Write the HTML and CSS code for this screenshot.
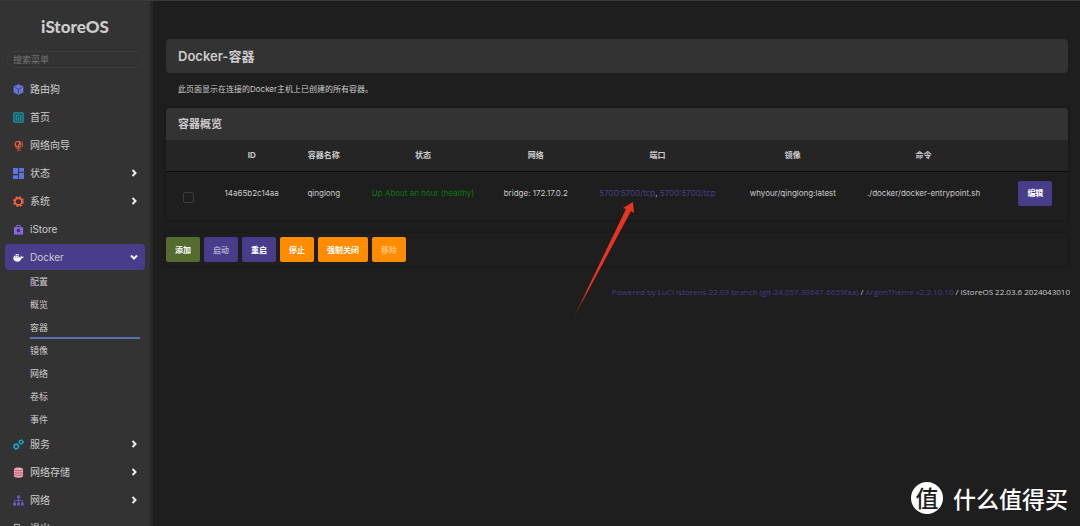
FILE: index.html
```html
<!DOCTYPE html>
<html lang="zh-CN">
<head>
<meta charset="utf-8">
<meta name="viewport" content="width=device-width, initial-scale=1">
<title>iStoreOS - Docker 容器</title>
<link rel="stylesheet" href="styles.css">
</head>
<body>
<div class="shell">
  <aside class="sidebar">
    <a class="brand" href="#">iStoreOS</a>
    <input class="search" type="text" placeholder="搜索菜单" aria-label="搜索菜单">
    <nav class="menu">
      <a class="item" href="#"><svg class="icon" viewBox="0 0 12 12"><path fill="#6675e0" d="M6 .3 11.300 2.800v6.400L6 11.800.700 9.200V2.800z"/><path fill="none" stroke="#333" stroke-width=".8" d="M2.300 3.800 6 5.700l3.700-1.900M6 5.700V10"/></svg>路由狗</a>
      <a class="item" href="#"><svg class="icon" viewBox="0 0 12 12"><path fill="#174b55" stroke="#20b5c5" d="M1 1h10v10H1z"/><path fill="none" stroke="#20b5c5" d="M3.500 4v5.500M6 5.500v4M8.500 3v6.500M3 3.500h4"/></svg>首页</a>
      <a class="item" href="#"><svg class="icon" viewBox="0 0 12 12"><circle cx="5.500" cy="4.700" r="3.700" fill="#f06543"/><path fill="#333" d="m4 2.200 2 .5 1 1.200-1 1-1 .2.500 1.400-.8.8-1.400-2L3 3.500zM7 5l1.500.5-.8 1.300-1 .3z"/><path fill="none" stroke="#d05035" d="M9.200 1.300a4.700 4.700 0 0 1-6.500 6.800M6.300 9v2M4 11.300h4.500"/></svg>网络向导</a>
      <a class="item" href="#"><svg class="icon" viewBox="0 0 12 12"><path fill="#5e72e4" d="M0 0h5.500v6.500H0zM6.500 0H12v4H6.500zM0 7.800h5.500V12H0zM6.500 5.300H12V12H6.500z"/></svg>状态<svg class="arrow" viewBox="0 0 8 8"><path d="m2.500 1 3 3-3 3"/></svg></a>
      <a class="item" href="#"><svg class="icon" viewBox="0 0 12 12"><circle cx="6" cy="6" r="5.100" fill="none" stroke="#fb6340" stroke-width="1.600" stroke-dasharray="2.200 1.805"/><circle cx="6" cy="6" r="3.800" fill="none" stroke="#fb6340" stroke-width="1.900"/></svg>系统<svg class="arrow" viewBox="0 0 8 8"><path d="m2.500 1 3 3-3 3"/></svg></a>
      <a class="item" href="#"><svg class="icon" viewBox="0 0 12 12"><path fill="#8965e0" d="M1 3.500h10v8H1z"/><path fill="none" stroke="#8965e0" d="M4 4V1.500h4V4"/><circle cx="6" cy="7.300" r="2" fill="#443568"/></svg>iStore</a>
      <a class="item current" href="#"><svg class="icon" viewBox="0 0 12 12"><path fill="#fff" d="M.2 5.800h8.200c.3-.8.1-1.500-.1-2 .8.3 1.200.9 1.300 1.400.8-.2 1.600 0 2.200.3-.4.9-1.200 1.300-2.300 1.300C8.600 9.500 6.800 10.500 4.500 10.500 1.800 10.500.2 9 .2 5.800zM1 4h1.500v1.400H1zM2.900 4h1.500v1.400H2.900zM4.800 4h1.500v1.400H4.800zM2.900 2.300h1.500v1.300H2.900zM4.800 2.300h1.500v1.300H4.800z"/></svg>Docker<svg class="arrow" viewBox="0 0 8 8"><path d="m1 2.500 3 3 3-3"/></svg></a>
      <ul class="submenu">
        <li><a href="#">配置</a></li>
        <li><a href="#">概览</a></li>
        <li><a class="selected" href="#">容器</a></li>
        <li><a href="#">镜像</a></li>
        <li><a href="#">网络</a></li>
        <li><a href="#">卷标</a></li>
        <li><a href="#">事件</a></li>
      </ul>
      <a class="item" href="#"><svg class="icon" viewBox="0 0 12 12"><g fill="none" stroke="#11b5dc"><circle cx="3.500" cy="8.200" r="2.300" stroke-width="1.300"/><circle cx="3.500" cy="8.200" r="3.100" stroke-dasharray="1.300 1.135"/><circle cx="8.800" cy="3.300" r="1.900" stroke-width="1.200"/><circle cx="8.800" cy="3.300" r="2.600" stroke-dasharray="1.300 1.423"/></g></svg>服务<svg class="arrow" viewBox="0 0 8 8"><path d="m2.500 1 3 3-3 3"/></svg></a>
      <a class="item" href="#"><svg class="icon" viewBox="0 0 12 12"><path fill="#f3a4b5" d="M1 2.300C1-.1 11-.1 11 2.300v7.500c0 2.400-10 2.400-10 0z"/><path fill="none" stroke="#803f4d" stroke-width=".7" d="M1 3c1 1.500 9 1.500 10 0M1 5.500C2 7 10 7 11 5.500M1 8c1 1.500 9 1.500 10 0"/></svg>网络存储<svg class="arrow" viewBox="0 0 8 8"><path d="m2.500 1 3 3-3 3"/></svg></a>
      <a class="item" href="#"><svg class="icon" viewBox="0 0 12 12"><path fill="#7558cc" d="M4.500.5h3v3h-3zM.3 8.500h3v3h-3zM4.500 8.500h3v3h-3zM8.700 8.500h3v3h-3z"/><path fill="none" stroke="#7558cc" stroke-width=".9" d="M6 3v6M1.800 9V6h8.400v3"/></svg>网络<svg class="arrow" viewBox="0 0 8 8"><path d="m2.500 1 3 3-3 3"/></svg></a>
      <a class="item" href="#"><svg class="icon" viewBox="0 0 12 12"><path fill="none" stroke="#ccc" d="M7 4V1.500H1.500v9H7V8M4 6h7M9 4l2 2-2 2"/></svg>退出</a>
    </nav>
  </aside>
  <main class="main">
    <h1 class="title">Docker-容器</h1>
    <p class="intro">此页面显示在连接的Docker主机上已创建的所有容器。</p>
    <section class="panel">
      <h2 class="panel-title">容器概览</h2>
      <table class="containers">
        <colgroup><col class="c-check"><col class="c-id"><col class="c-name"><col class="c-status"><col class="c-net"><col class="c-port"><col class="c-image"><col class="c-cmd"><col class="c-edit"></colgroup>
        <thead><tr><td></td><th scope="col">ID</th><th scope="col">容器名称</th><th scope="col">状态</th><th scope="col">网络</th><th scope="col">端口</th><th scope="col">镜像</th><th scope="col">命令</th><td></td></tr></thead>
        <tbody><tr>
          <td class="check"><input class="box" type="checkbox" aria-label="选择 qinglong"></td>
          <td>14a65b2c14aa</td><td>qinglong</td><td class="healthy">Up About an hour (healthy)</td><td>bridge: 172.17.0.2</td>
          <td><a class="link" href="#">5700:5700/tcp</a>, <a class="link" href="#">5700:5700/tcp</a></td>
          <td>whyour/qinglong:latest</td><td>./docker/docker-entrypoint.sh</td>
          <td class="edit"><button class="btn purple" type="button">编辑</button></td>
        </tr></tbody>
      </table>
    </section>
    <div class="actions">
      <button class="btn green" type="button">添加</button>
      <button class="btn purple dim" type="button">启动</button>
      <button class="btn purple" type="button">重启</button>
      <button class="btn orange" type="button">停止</button>
      <button class="btn orange" type="button">强制关闭</button>
      <button class="btn orange faded" type="button">移除</button>
    </div>
    <footer class="footer"><a class="link" href="#">Powered by LuCI istoreos-22.03 branch (git-24.057.30647-6659faa)</a> / <a class="link" href="#">ArgonTheme v2.2.10.10</a> / iStoreOS 22.03.6 2024043010</footer>
  </main>
</div>
<svg class="pointer" viewBox="0 0 64 122" aria-hidden="true"><defs><linearGradient id="fade" x1="0" y1="1" x2="0.500" y2="0"><stop offset="0" stop-color="#e0301e" stop-opacity=".2"/><stop offset=".3" stop-color="#e83420"/></linearGradient></defs><path fill="url(#fade)" d="M1 120 55 8l-3-1L62 1l1 11-3-2z"/></svg>
<div class="watermark"><span class="seal">值</span><span>什么值得买</span></div>
</body>
</html>
```
FILE: styles.css
```css
* { box-sizing: border-box; }
body {
  margin: 0;
  background: #1e1e1e;
  color: #ccc;
  font: 8px/12px Inter, "Noto Sans CJK SC", sans-serif;
  overflow: hidden;
}
a { color: inherit; text-decoration: none; }
.shell { display: flex; height: 100vh; border-top: 1px solid #3a3a3a; }
.sidebar {
  flex: 0 0 153px;
  background: #333;
  border-right: 3px solid #282828;
  overflow: hidden;
}
.brand {
  display: block;
  padding: 14px 0 12px;
  text-align: center;
  font: 900 17px/24px Lato, sans-serif;
}
.search {
  display: block;
  width: 136px;
  height: 17px;
  margin: 0 7px 8px;
  padding: 0 5px;
  border: 1px solid #3b3b3b;
  border-radius: 8px;
  background: transparent;
  color: #ccc;
  font: 9px/14px "Noto Sans CJK SC", sans-serif;
}
.search::placeholder { color: #777; }
.menu { padding: 0 5px; }
.item {
  display: flex;
  align-items: center;
  height: 26px;
  margin-bottom: 2px;
  padding: 0 7px 0 8px;
  border-radius: 4px;
  font: 10px/14px Inter, "Noto Sans CJK SC", sans-serif;
}
.icon { width: 11px; height: 11px; margin-right: 6px; }
.arrow { width: 8px; height: 8px; margin-left: auto; fill: none; stroke: #eee; stroke-width: 2; }
.current { margin-bottom: 0; background: #483d8b; }
.submenu { margin: 0; padding: 0 5px 0 25px; list-style: none; }
.submenu a { display: block; height: 23px; border-bottom: 2px solid transparent; font-size: 9px; line-height: 23px; }
.submenu .selected { border-color: #5a72b5; }
.main { flex: 1; min-width: 0; padding: 38px 10px 0 13px; }
.title, .panel-title { margin: 0; background: #333; font-weight: 700; }
.title, .panel, .actions { margin-right: 2px; }
.title {
  padding: 7px 12px;
  border-radius: 4px;
  font: 600 13px/20px Inter, "Noto Sans CJK SC", sans-serif;
}
.intro { margin: 0; padding: 10px 12px 13px; }
.panel { border-radius: 4px; overflow: hidden; box-shadow: 0 0 3px #151515; }
.panel-title { padding: 6px 12px; font-size: 11px; line-height: 20px; }
.containers { width: 100%; table-layout: fixed; border-collapse: collapse; text-align: center; }
.containers thead { height: 31px; background: #252525; border-bottom: 1px solid #0c0c0c; }
.containers th, .containers td { padding: 0; white-space: nowrap; }
.containers th { font-weight: 700; }
.containers tbody td { height: 49px; padding-bottom: 5px; }
.containers tbody .check { padding: 3px 0 0; }
.containers tbody .edit { padding-left: 7px; }
.c-check { width: 5%; }
.c-id { width: 9%; }
.c-name { width: 7%; }
.c-status { width: 15%; }
.c-net { width: 10%; }
.c-port { width: 17%; }
.c-image { width: 13%; }
.c-cmd { width: 16%; }
.c-edit { width: 8%; }
.box { appearance: none; display: inline-block; width: 11px; height: 11px; margin: 0; border: 1px solid #3c3c3c; border-radius: 2px; vertical-align: middle; }
.healthy { color: #087a0d; }
.link { color: #483d8b; }
.actions { display: flex; gap: 4px; margin-top: 13px; padding: 4px 0; box-shadow: 0 0 3px #161616; border-radius: 4px; }
.btn {
  height: 25px;
  padding: 0 9px;
  border: 0;
  border-radius: 2px;
  color: #fff;
  font: 700 8px/12px "Noto Sans CJK SC", sans-serif;
}
.green { background: #556b2f; }
.purple { background: #483d8b; }
.orange { background: #ff8c00; }
.dim { color: #aaa6cc; }
.faded { color: #ffc177; }
.footer { padding-top: 20px; font-family: "Open Sans", sans-serif; text-align: right; white-space: nowrap; }
.pointer { position: absolute; left: 571px; top: 201px; width: 64px; height: 122px; }
.watermark {
  position: absolute;
  right: 12px;
  bottom: 11px;
  display: flex;
  align-items: center;
  gap: 10px;
  color: #fff;
  font: 500 23px/34px "Noto Sans CJK SC", sans-serif;
}
.seal { width: 32px; height: 32px; border-radius: 50%; background: #fff; color: #1e1e1e; font-size: 23px; line-height: 31px; text-align: center; }
```
